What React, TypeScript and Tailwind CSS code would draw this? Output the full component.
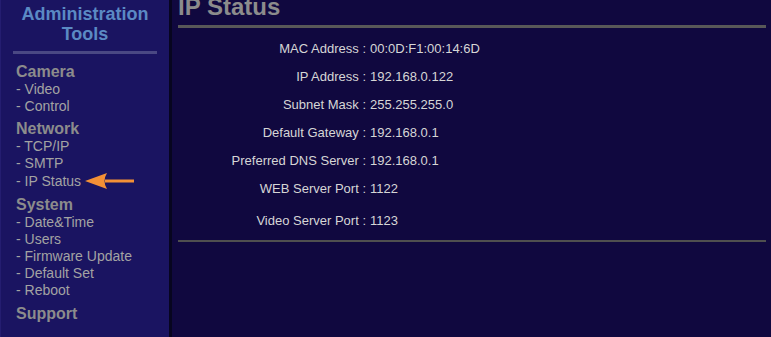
const menu = [
  { title: "Camera", items: ["Video", "Control"] },
  { title: "Network", items: ["TCP/IP", "SMTP", "IP Status"] },
  { title: "System", items: ["Date&Time", "Users", "Firmware Update", "Default Set", "Reboot"] },
  { title: "Support", items: [] as string[] },
];

const rows = [
  { label: "MAC Address", value: "00:0D:F1:00:14:6D" },
  { label: "IP Address", value: "192.168.0.122" },
  { label: "Subnet Mask", value: "255.255.255.0" },
  { label: "Default Gateway", value: "192.168.0.1" },
  { label: "Preferred DNS Server", value: "192.168.0.1" },
  { label: "WEB Server Port", value: "1122" },
];

const Arrow = () => (
  <svg width="50" height="18" viewBox="0 0 50 18" className="ml-[4px]">
    <path d="M20 7.5 H49 V10.5 H20 Z" fill="#f39036" />
    <path d="M0 9 L22 1 Q17 9 22 17 Z" fill="#f39036" />
  </svg>
);

export default function App() {
  return (
    <div
      className="flex h-[337px] w-[771px] overflow-hidden bg-[#10083f]"
      style={{ fontFamily: '"Liberation Sans", Arial, sans-serif' }}
    >
      {/* Sidebar */}
      <aside className="flex w-[172px] shrink-0 flex-col border-r-[3px] border-l border-r-[#07051f] border-l-[#241d70] bg-[#1a1461]">
        <div className="pt-[4px] text-center text-[18px] font-bold leading-[20px] text-[#5b8ac4]">
          Administration
          <br />
          Tools
        </div>
        <div className="mx-[12px] mt-[7px] h-[3px] bg-[#4a4883]" />

        <nav className="mt-[8px] pl-[15px]">
          {menu.map((group, i) => (
            <div key={group.title} className={i === 0 ? "" : i === 1 ? "mt-[4px]" : "mt-[5px]"}>
              <div className="text-[16px] font-bold leading-[19px] text-[#8c8c8c]">{group.title}</div>
              {group.items.map((item) => (
                <div key={item} className="flex items-center text-[14px] leading-[17px] text-[#a3a3a3]">
                  <span>- {item}</span>
                  {item === "IP Status" && <Arrow />}
                </div>
              ))}
            </div>
          ))}
        </nav>
      </aside>

      {/* Main */}
      <main className="flex-1 pl-[6px] pr-[5px]">
        <h1 className="-mt-[5px] text-[24px] font-bold leading-[24px] text-[#8c8c8c]">IP Status</h1>
        <div className="mt-[6px] h-[3px] bg-[#585858]" />

        <div className="mt-[6px] text-[13px] leading-[15px] text-[#d6d6d6]">
          {rows.map((r) => (
            <div key={r.label} className="flex h-[28px] items-center">
              <span className="w-[188px] text-right">{r.label} :</span>
              <span className="pl-[4px]">{r.value}</span>
            </div>
          ))}
          <div className="mt-[4px] flex h-[28px] items-center">
            <span className="w-[188px] text-right">Video Server Port :</span>
            <span className="pl-[4px]">1123</span>
          </div>
        </div>

        <div className="mt-[6px] h-[2px] bg-[#4f4f4f]" />
      </main>
    </div>
  );
}
